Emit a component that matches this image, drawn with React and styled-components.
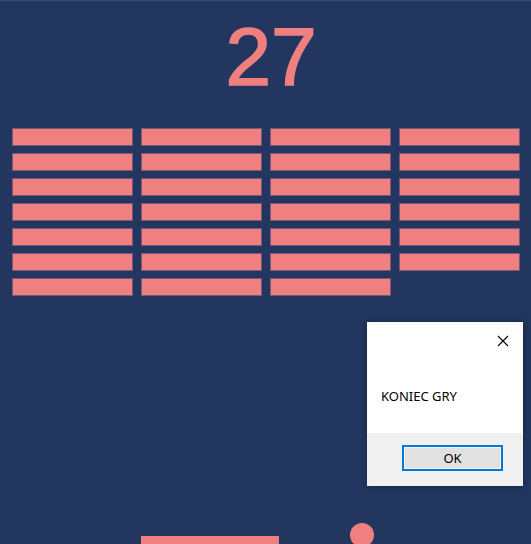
import React from "react";
import styled, { createGlobalStyle } from "styled-components";

const GlobalStyle = createGlobalStyle`
    html, body {
        margin: 0;
        padding: 0;
        background-color: #22365f;
        overflow: hidden;
    }
`;

const Board = styled.div`
    position: relative;
    width: 531px;
    height: 544px;
    box-sizing: border-box;
    border-top: 1px solid #394a70;
    background-color: #22365f;
    overflow: hidden;
`;

const Score = styled.div`
    padding-top: 15px;
    height: 82px;
    font-family: "Liberation Sans", Arial, sans-serif;
    font-size: 82px;
    line-height: 82px;
    color: #f08080;
    -webkit-text-stroke: 1.6px #f08080;
    text-align: center;
    padding-left: 11px;
`;

const Wall = styled.div`
    display: flex;
    gap: 8px;
    margin-top: 30px;
    padding-left: 12px;
`;

const Column = styled.div`
    display: flex;
    flex-direction: column;
    gap: 7px;
`;

const Brick = styled.div`
    width: 121px;
    height: 18px;
    box-sizing: border-box;
    background-color: #f08080;
    border: 1px solid #75587a;
`;

const Paddle = styled.div`
    position: absolute;
    left: 141px;
    top: 535px;
    width: 138px;
    height: 20px;
    background-color: #f08080;
`;

const Ball = styled.div`
    position: absolute;
    left: 350px;
    top: 522px;
    width: 24px;
    height: 24px;
    border-radius: 50%;
    background-color: #f08080;
`;

const Dialog = styled.div`
    position: absolute;
    left: 367px;
    top: 321px;
    width: 156px;
    display: flex;
    flex-direction: column;
    background-color: #fff;
    box-shadow: 0 0 6px rgba(0, 0, 0, 0.35);
    font-family: "Noto Sans", "Open Sans", sans-serif;
`;

const TitleBar = styled.div`
    height: 38px;
    display: flex;
    justify-content: flex-end;
    align-items: center;
    padding-right: 14px;
`;

const Message = styled.div`
    height: 73px;
    padding-left: 14px;
    box-sizing: border-box;
    padding-top: 28px;
    font-size: 13px;
    line-height: 16px;
    color: #000;
`;

const Footer = styled.div`
    height: 53px;
    background-color: #f0f0f0;
    display: flex;
    justify-content: flex-end;
    align-items: flex-start;
    padding-top: 12px;
    padding-right: 20px;
    box-sizing: border-box;
`;

const OkButton = styled.button`
    width: 101px;
    height: 26px;
    box-sizing: border-box;
    border: 2px solid #0078d7;
    box-shadow: inset 0 0 0 1px #f4f4f4;
    background-color: #e1e1e1;
    font-family: "Noto Sans", "Open Sans", sans-serif;
    font-size: 13px;
    color: #000;
    padding: 0;
`;

const columns = [7, 7, 7, 6];

const CloseIcon = () => (
    <svg width="12" height="12" viewBox="0 0 12 12">
        <path d="M1 1 L11 11 M11 1 L1 11" stroke="#000" strokeWidth="1.1" />
    </svg>
);

export default function App() {
    return (
        <>
            <GlobalStyle />
            <Board>
                <Score>27</Score>
                <Wall>
                    {columns.map((count, c) => (
                        <Column key={c}>
                            {Array.from({ length: count }).map((_, r) => (
                                <Brick key={r} />
                            ))}
                        </Column>
                    ))}
                </Wall>
                <Paddle />
                <Ball />
                <Dialog>
                    <TitleBar>
                        <CloseIcon />
                    </TitleBar>
                    <Message>KONIEC GRY</Message>
                    <Footer>
                        <OkButton>OK</OkButton>
                    </Footer>
                </Dialog>
            </Board>
        </>
    );
}
